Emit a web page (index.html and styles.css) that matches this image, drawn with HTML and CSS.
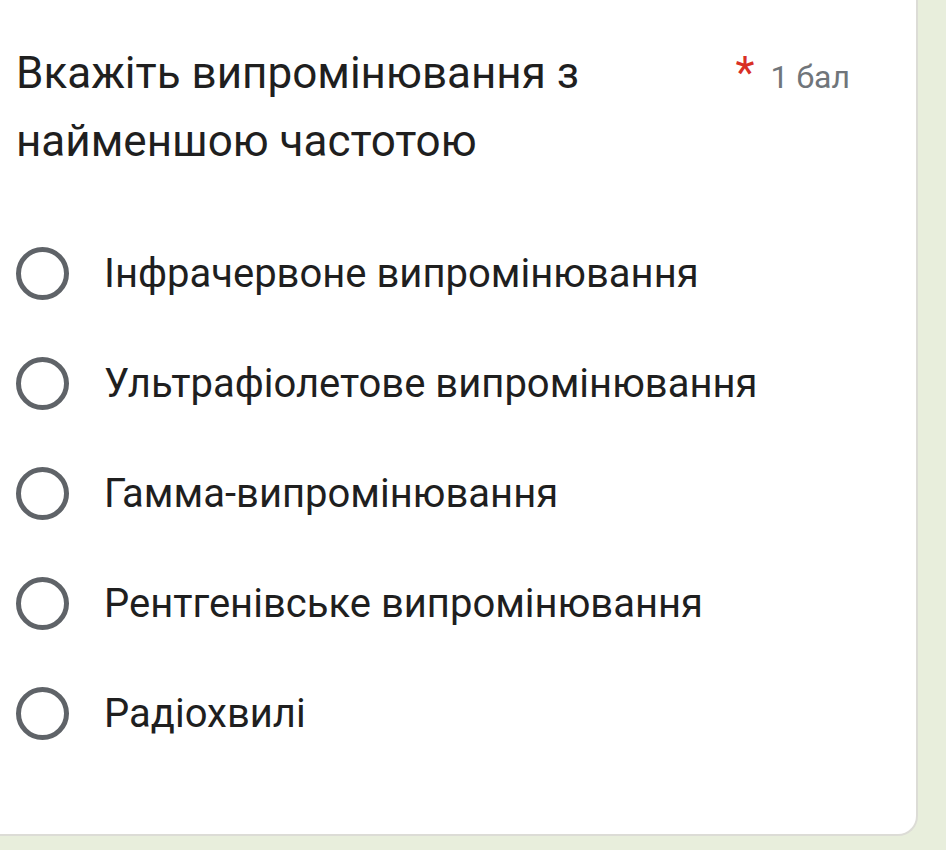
FILE: index.html
```html
<!DOCTYPE html>
<html lang="uk">

<head>
    <meta charset="UTF-8">
    <meta name="viewport" content="width=device-width, initial-scale=1.0">
    <title>Питання</title>
    <link rel="stylesheet" href="styles.css">
</head>

<body>
    <div class="card">
        <div class="question">
            <div class="title">Вкажіть випромінювання з найменшою частотою</div>
            <div class="points"><span class="required">*</span> 1 бал</div>
        </div>
        <div class="options">
            <label class="option"><span class="radio"></span><span class="label">Інфрачервоне випромінювання</span></label>
            <label class="option"><span class="radio"></span><span class="label">Ультрафіолетове випромінювання</span></label>
            <label class="option"><span class="radio"></span><span class="label">Гамма-випромінювання</span></label>
            <label class="option"><span class="radio"></span><span class="label">Рентгенівське випромінювання</span></label>
            <label class="option"><span class="radio"></span><span class="label">Радіохвилі</span></label>
        </div>
    </div>
</body>

</html>
```

FILE: styles.css
```css
body {
    font-family: Roboto, "Noto Sans", Arial, sans-serif;
    background-color: #e8eedc;
    margin: 0;
    padding: 0;
    width: 946px;
    height: 850px;
    overflow: hidden;
}

.card {
    background-color: #ffffff;
    width: 918px;
    height: 836px;
    box-sizing: border-box;
    border-right: 2px solid #dcdcd6;
    border-bottom: 2px solid #dcdcd6;
    border-bottom-right-radius: 20px;
    padding: 39px 0 0 16px;
}

.question {
    display: flex;
    align-items: baseline;
    justify-content: space-between;
    padding-right: 66px;
}

.title {
    font-size: 44px;
    line-height: 68px;
    color: #1f1f1f;
    width: 640px;
}

.points {
    font-size: 32px;
    line-height: 68px;
    color: #70757a;
    white-space: nowrap;
}

.required {
    color: #d93025;
    font-size: 44px;
    margin-right: 8px;
}

.options {
    display: flex;
    flex-direction: column;
    margin-top: 43px;
}

.option {
    display: flex;
    align-items: center;
    height: 110px;
}

.radio {
    width: 43px;
    height: 43px;
    border: 5px solid #5f6368;
    border-radius: 50%;
    flex-shrink: 0;
}

.label {
    font-size: 40px;
    color: #1f1f1f;
    margin-left: 35px;
}
```
